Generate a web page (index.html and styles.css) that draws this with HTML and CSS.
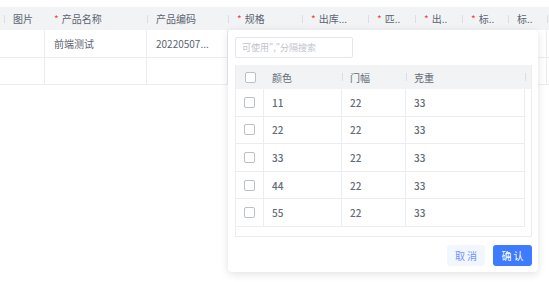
FILE: index.html
```html
<!DOCTYPE html>
<html lang="zh">
<head>
  <meta charset="UTF-8" />
  <meta name="viewport" content="width=device-width, initial-scale=1.0" />
  <title>规格选择</title>
  <link rel="stylesheet" href="styles.css">
</head>
<body>
  <div class="sheet">
    <div class="row head">
      <div class="cell"></div>
      <div class="cell sep">图片</div>
      <div class="cell"><span class="req">*</span>产品名称</div>
      <div class="cell sep">产品编码</div>
      <div class="cell sep"><span class="req">*</span>规格</div>
      <div class="cell sep"><span class="req">*</span>出库...</div>
      <div class="cell sep"><span class="req">*</span>匹..</div>
      <div class="cell sep"><span class="req">*</span>出..</div>
      <div class="cell sep"><span class="req">*</span>标..</div>
      <div class="cell sep">标..</div>
      <div class="cell sep"></div>
    </div>
    <div class="row body">
      <div class="cell first"></div>
      <div class="cell"></div>
      <div class="cell">前端测试</div>
      <div class="cell">20220507...</div>
      <div class="cell"></div>
      <div class="cell"></div>
      <div class="cell"></div>
      <div class="cell"></div>
      <div class="cell"></div>
      <div class="cell"></div>
      <div class="cell"></div>
    </div>
    <div class="row body">
      <div class="cell first"></div>
      <div class="cell"></div>
      <div class="cell"></div>
      <div class="cell"></div>
      <div class="cell"></div>
      <div class="cell"></div>
      <div class="cell"></div>
      <div class="cell"></div>
      <div class="cell"></div>
      <div class="cell"></div>
      <div class="cell"></div>
    </div>
  </div>

  <div class="popover">
    <input class="search" type="text" placeholder="可使用&quot;,&quot;分隔搜索" />

    <div class="spec-table">
      <div class="spec-row spec-head">
        <div class="c"><span class="check"></span></div>
        <div class="c">颜色</div>
        <div class="c sep">门幅</div>
        <div class="c sep">克重</div>
        <div class="c sep"></div>
      </div>
      <div class="spec-row">
        <div class="c"><span class="check"></span></div>
        <div class="c">11</div>
        <div class="c">22</div>
        <div class="c">33</div>
      </div>
      <div class="spec-row">
        <div class="c"><span class="check"></span></div>
        <div class="c">22</div>
        <div class="c">22</div>
        <div class="c">33</div>
      </div>
      <div class="spec-row">
        <div class="c"><span class="check"></span></div>
        <div class="c">33</div>
        <div class="c">22</div>
        <div class="c">33</div>
      </div>
      <div class="spec-row">
        <div class="c"><span class="check"></span></div>
        <div class="c">44</div>
        <div class="c">22</div>
        <div class="c">33</div>
      </div>
      <div class="spec-row">
        <div class="c"><span class="check"></span></div>
        <div class="c">55</div>
        <div class="c">22</div>
        <div class="c">33</div>
      </div>
    </div>

    <div class="actions">
      <button class="btn cancel">取 消</button>
      <button class="btn ok">确 认</button>
    </div>
  </div>
</body>
</html>
```

FILE: styles.css
```css
* {
  margin: 0;
  padding: 0;
  box-sizing: border-box;
  font-family: "Noto Sans CJK SC", "Noto Sans", sans-serif;
}

body {
  background: #fff;
  color: #5c6470;
  font-size: 10px;
  padding-top: 7px;
  overflow: hidden;
}

/* main table */
.row {
  display: grid;
  grid-template-columns: 4px 41px 102px 81px 74px 66px 47px 47px 46px 39px 1fr;
}

.cell {
  position: relative;
  display: flex;
  align-items: center;
  padding-left: 9px;
  white-space: nowrap;
  overflow: hidden;
}

.head {
  height: 23px;
  background: #f2f3f5;
}

.head .cell.sep::before {
  content: "";
  position: absolute;
  left: 0;
  top: 8px;
  width: 1px;
  height: 8px;
  background: #dcdfe6;
}

.req {
  color: #f53f3f;
  margin-right: 3px;
}

.body {
  height: 27.5px;
  border-bottom: 1px solid #ebedf0;
}

.body .cell {
  border-right: 1px solid #ebedf0;
}

.body .cell.first {
  border-right: none;
}

/* popover */
.popover {
  position: absolute;
  left: 228px;
  top: 30px;
  width: 310px;
  height: 242px;
  background: #fff;
  border-radius: 4px;
  box-shadow: 0 2px 8px rgba(0, 0, 0, 0.12);
  padding: 7px 6px 6px 7px;
  display: flex;
  flex-direction: column;
}

.search {
  width: 118px;
  height: 21px;
  border: 1px solid #e5e6eb;
  border-radius: 2px;
  padding: 0 6px;
  font-size: 9px;
  color: #4e5969;
  outline: none;
}

.search::placeholder {
  color: #c0c4cc;
}

.spec-table {
  margin-top: 7px;
  height: 172px;
  border: 1px solid #ebedf0;
  border-top: none;
}

.spec-row {
  display: grid;
  grid-template-columns: 28px 78px 64px 119px 8px;
  height: 27.6px;
}

.spec-row .c {
  position: relative;
  display: flex;
  align-items: center;
  padding-left: 8px;
  border-right: 1px solid #ebedf0;
  border-bottom: 1px solid #ebedf0;
  font-weight: 500;
  color: #636b76;
}

.spec-row .c:first-child {
  padding-left: 0;
  justify-content: center;
}

.spec-head {
  height: 24px;
  background: #f2f3f5;
}

.spec-head .c {
  border: none;
  font-weight: 400;
}

.spec-head .c.sep::before {
  content: "";
  position: absolute;
  left: 0;
  top: 8px;
  width: 1px;
  height: 8px;
  background: #dcdfe6;
}

.check {
  width: 11px;
  height: 11px;
  border: 1px solid #bcc0c7;
  border-radius: 2px;
  background: #fff;
}

.actions {
  margin-top: 8px;
  display: flex;
  justify-content: flex-end;
  gap: 8px;
}

.btn {
  height: 21px;
  border: none;
  border-radius: 3px;
  font-size: 10px;
  cursor: pointer;
}

.cancel {
  width: 38px;
  background: #f2f6ff;
  color: #6f93ff;
}

.ok {
  width: 39px;
  background: #3d7bff;
  color: #fff;
}
```
